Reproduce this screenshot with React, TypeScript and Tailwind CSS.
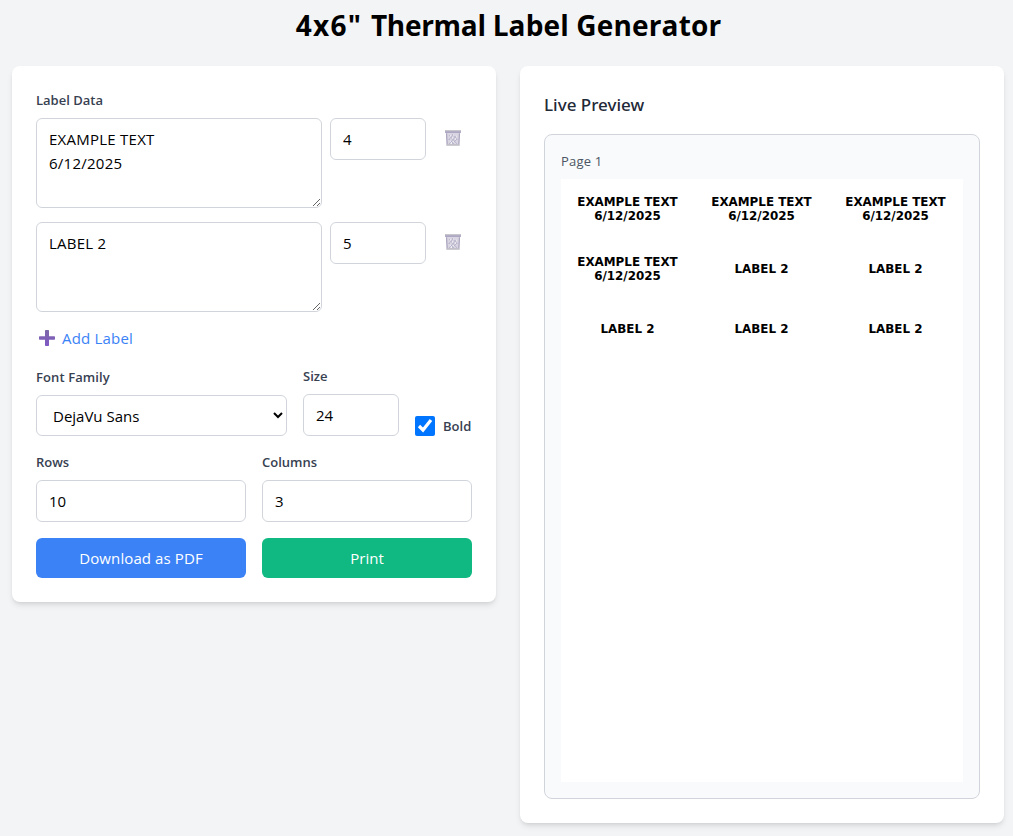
import React from "react";

const field =
  "block rounded-md border border-[#d1d5db] bg-white px-[12px] text-[15px] leading-6 text-black outline-none";
const label = "block text-[13px] font-semibold leading-5 text-[#374151]";

function TrashIcon() {
  return (
    <svg width="16" height="16" viewBox="0 0 16 16" fill="none">
      <path d="M1 2h14l-.7 12.500H1.700z" fill="#d9d5e2" />
      <path d="M1.500 3.300l.7 11M14.500 3.300l-.7 11" stroke="#aaa4bd" strokeWidth="1.2" />
      <path d="M4 5l8 9M4 9l5 5M7 4l5.500 6M12 5l-8 9M12 9l-5 5M9 4L3.500 10" stroke="#b4aec6" strokeWidth=".8" />
      <path d="M5 6h1M8 5h1M11 6h1M7 8h1M10 9h1M5 11h1M8 12h1M6 13.200h1" stroke="#fff" strokeWidth="1.2" />
      <path d="M0 0h16v1.200H0z" fill="#c9c7ce" />
      <path d="M0 1.200h16v1.600H0z" fill="#a39cbb" />
      <path d="M1.300 14.200h13.400v1.500H1.300z" fill="#b9b6c1" />
    </svg>
  );
}

function PlusIcon() {
  return (
    <svg width="16" height="16" viewBox="0 0 16 16">
      <defs>
        <linearGradient id="plus" x1="0" y1="0" x2="0" y2="1">
          <stop offset="0" stopColor="#7d68a8" />
          <stop offset="1" stopColor="#8058c4" />
        </linearGradient>
      </defs>
      <path
        d="M6.700 0h2.600q.7 0 .7.7V6.200h5.300q.7 0 .7.7v2.200q0 .7-.7.7H10v5.500q0 .7-.7.7H6.700q-.7 0-.7-.7V9.800H.7Q0 9.800 0 9.100V6.900Q0 6.200.7 6.200H6V.7Q6 0 6.700 0z"
        fill="url(#plus)"
      />
    </svg>
  );
}

function LabelRow({ text, count }: { text: string; count: number }) {
  return (
    <div className="flex items-start gap-2">
      <textarea defaultValue={text} rows={3} spellCheck={false} className={`${field} h-[90px] w-[286px] resize py-2 tracking-[0.25px]`} />
      <input defaultValue={count} className={`${field} h-[42px] w-24`} />
      <button className="ml-[11px] mt-3 h-4 w-4">
        <TrashIcon />
      </button>
    </div>
  );
}

const cells = [
  ...Array<string[]>(4).fill(["EXAMPLE TEXT", "6/12/2025"]),
  ...Array<string[]>(5).fill(["LABEL 2"]),
];

export default function App() {
  return (
    <div className="h-[836px] overflow-hidden bg-[#f3f4f6] font-['Open_Sans','Noto_Sans',sans-serif] text-black">
      <h1 className="h-[66px] pl-[4px] pt-[7px] text-center text-[28px] font-bold leading-9">
        <span className="tracking-[1.300px]">4x6" </span>
        <span className="tracking-[-0.3px]">Thermal </span>
        <span className="tracking-[0.15px]">Label Generator</span>
      </h1>
      <div className="flex items-start gap-6 pl-3">
        <section className="h-[536px] w-[484px] rounded-lg bg-white p-6 shadow-md">
          <div className={label}>
            <span>Label Data</span>
          </div>
          <div className="mt-2 flex flex-col gap-[14px]">
            <LabelRow text={"EXAMPLE TEXT\n6/12/2025"} count={4} />
            <LabelRow text="LABEL 2" count={5} />
          </div>
          <button className="ml-[3px] mt-[14px] flex h-6 items-center gap-[7px] text-[15px] leading-6 text-[#3b82f6]">
            <PlusIcon />
            <span className="tracking-[0.2px]">Add Label</span>
          </button>
          <div className="mt-4 flex h-[70px] items-end gap-4">
            <div className="w-[251px]">
              <div className={label}>
                <span className="tracking-[0.1px]">Font Family</span>
              </div>
              <select className={`${field} mt-2 h-[41px] w-full`}>
                <option>DejaVu Sans</option>
              </select>
            </div>
            <div className="w-24">
              <div className={label}>
                <span>Size</span>
              </div>
              <input defaultValue="24" className={`${field} mt-2 h-[42px] w-full`} />
            </div>
            <label className="flex items-center gap-2">
              <input type="checkbox" defaultChecked className="h-5 w-5" />
              <span className={label}>Bold</span>
            </label>
          </div>
          <div className="mt-4 grid grid-cols-2 gap-4">
            <div>
              <div className={label}>
                <span>Rows</span>
              </div>
              <input defaultValue="10" className={`${field} mt-2 h-[42px] w-full`} />
            </div>
            <div>
              <div className={label}>
                <span>Columns</span>
              </div>
              <input defaultValue="3" className={`${field} mt-2 h-[42px] w-full`} />
            </div>
            <button className="h-10 rounded-md bg-[#3b82f6] text-[15px] text-white">
              <span className="tracking-[0.1px]">Download as PDF</span>
            </button>
            <button className="h-10 rounded-md bg-[#10b981] text-[15px] text-white">
              <span>Print</span>
            </button>
          </div>
        </section>
        <section className="h-[757px] w-[484px] rounded-lg bg-white p-6 shadow-md">
          <h2 className="h-[44px] font-['Noto_Sans',sans-serif] text-[17px] font-medium leading-[29px] text-[#1f2937]">
            <span>Live Preview</span>
          </h2>
          <div className="h-[665px] rounded-lg border border-[#d1d5db] bg-[#f9fafb] p-4">
            <div className="h-7 text-[13px] leading-5 text-[#4b5563]">
              <span className="tracking-[0.2px]">Page 1</span>
            </div>
            <div className="grid h-[603px] w-[402px] grid-cols-3 grid-rows-[60px_60px_60px] bg-white font-['DejaVu_Sans',sans-serif] text-[11.9px] font-bold leading-[14px] text-black">
              {cells.map((lines, i) => (
                <div key={i} className="flex flex-col items-center justify-center pr-px">
                  {lines.map((l) => (
                    <span key={l}>{l}</span>
                  ))}
                </div>
              ))}
            </div>
          </div>
        </section>
      </div>
    </div>
  );
}
